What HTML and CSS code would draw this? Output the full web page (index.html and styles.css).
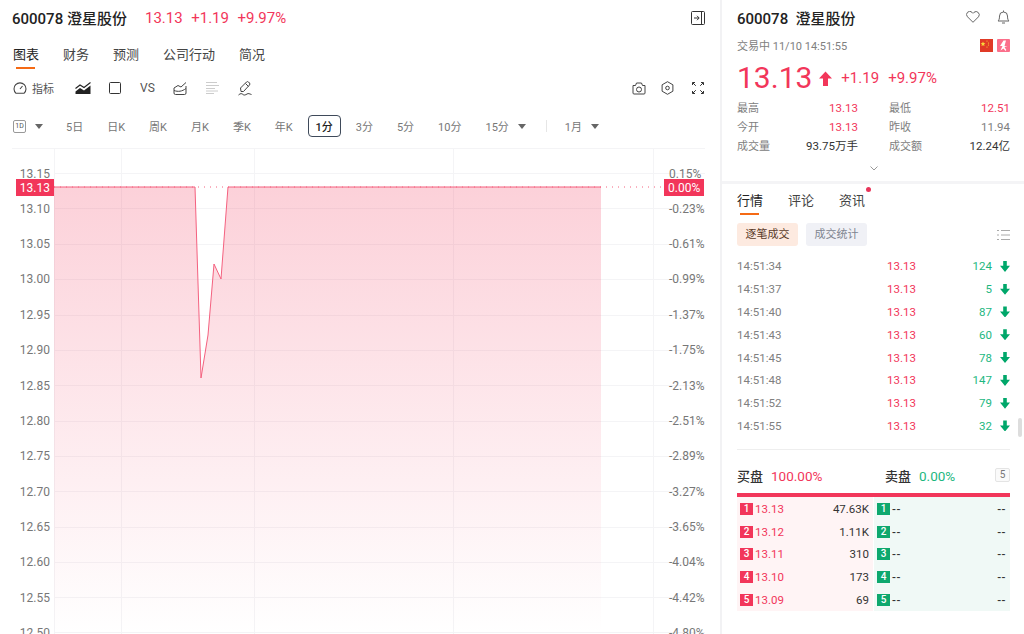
FILE: index.html
```html
<!DOCTYPE html>
<html lang="zh-CN">
<head>
    <meta charset="UTF-8">
    <title>600078 澄星股份</title>
    <link rel="stylesheet" href="styles.css">
</head>
<body>
    <div class="page">
        <main class="left">
            <header class="quote-bar">
                <span class="quote-name">600078 澄星股份</span>
                <span class="quote-nums">
                    <span>13.13</span><span>+1.19</span><span>+9.97%</span>
                </span>
                <svg class="collapse" width="14" height="14" viewBox="0 0 14 14" fill="none" stroke="#333" stroke-width="1"><rect x="0.5" y="0.5" width="13" height="13" rx="1"/><path d="M10.5 0.5v13M3 7h5M6 4.8L8.2 7 6 9.2"/></svg>
            </header>

            <nav class="tabs">
                <a class="active">图表</a><a>财务</a><a>预测</a><a>公司行动</a><a>简况</a>
            </nav>

            <div class="tools">
                <span class="tool-label">
                    <svg width="14" height="12" viewBox="0 0 14 12" fill="none" stroke="#444" stroke-width="1.1"><path d="M3 11.3A6 6 0 1 1 11 11.3zM7 7l2.5-3"/></svg>
                    指标
                </span>
                <svg class="t1" width="16" height="12" viewBox="0 0 16 12" fill="none" stroke="#222" stroke-width="1.1"><path d="M0.5 6.5L5 3l4 2.5L15.5 0.5"/><path d="M0.5 12V9.5L5 6l4 2.5 6.5-5V12z" fill="#222" stroke="none"/></svg>
                <svg class="t2" width="12" height="12" viewBox="0 0 12 12" fill="none" stroke="#333"><rect x="0.5" y="0.5" width="11" height="11" rx="1"/></svg>
                <span class="t3">VS</span>
                <svg class="t4" width="14" height="13" viewBox="0 0 14 13" fill="none" stroke="#444"><path d="M1 6L5 3.5 8 5l5-4.500M1 6v5a1.500 1.500 0 0 0 1.500 1.500h9A1.500 1.500 0 0 0 13 11V4"/><path d="M1 8.500c4 1.500 8 1 12-2"/></svg>
                <svg class="t5" width="13" height="12" viewBox="0 0 13 12" fill="none" stroke="#ccc"><path d="M0 0.5h11M0 3.5h13M0 6.5h9M0 9h12M0 11.5h8"/></svg>
                <svg class="t6" width="14" height="15" viewBox="0 0 14 15" fill="none" stroke="#444"><path d="M3 10.500l-.5-3.500L8.500 1a1.500 1.500 0 0 1 2 0l1 1a1.500 1.500 0 0 1 0 2l-6 6.500zM7.500 2.500l3 3M0.500 14c2-2 3.500-1.500 4.500-.5s2.500.5 4-.5 2.500 0 4.500.5"/></svg>
                <span class="tools-right">
                    <svg width="14" height="13" viewBox="0 0 14 13" fill="none" stroke="#444"><path d="M1 3.500h2.500L4.500 1h5l1 2.500H13v7.500a1 1 0 0 1-1 1H2a1 1 0 0 1-1-1z"/><circle cx="7" cy="7.500" r="2.500"/></svg>
                    <svg width="13" height="14" viewBox="0 0 13 14" fill="none" stroke="#444"><path d="M6.500 0.700l5.400 3.100v6.400l-5.400 3.100-5.400-3.100V3.800z"/><circle cx="6.500" cy="7" r="1.800"/></svg>
                    <svg class="expand" width="12" height="12" viewBox="0 0 12 12" fill="none" stroke="#333"><path d="M0.500 3V0.500H3M0.800 0.800l3 3M11.500 3V0.500H9M11.200 0.800l-3 3M0.500 9v2.500H3M0.800 11.200l3-3M11.500 9v2.500H9M11.200 11.200l-3-3"/></svg>
                </span>
            </div>

            <div class="periods">
                <span class="period-1d">1D</span>
                <i class="caret first"></i>
                <a>5日</a><a>日K</a><a>周K</a><a>月K</a><a>季K</a><a>年K</a>
                <a class="active">1分</a><a>3分</a><a>5分</a><a>10分</a>
                <a>15分<i class="caret"></i></a>
                <span class="period-sep"></span>
                <a>1月<i class="caret"></i></a>
            </div>

            <svg class="chart" width="720" height="486" viewBox="0 148 720 486">
                <defs>
                    <linearGradient id="area" gradientUnits="userSpaceOnUse" x1="0" y1="187" x2="0" y2="634">
                        <stop offset="0" stop-color="#f2365a" stop-opacity="0.23"/>
                        <stop offset="1" stop-color="#f2365a" stop-opacity="0"/>
                    </linearGradient>
                </defs>
                <g stroke="#f4f4f6" fill="none">
                    <path d="M12 148.500H705"/>
                    <path d="M54 173.500H705M54 208.500H705M54 244.500H705M54 279.500H705M54 315.500H705M54 350.500H705M54 385.500H705M54 421.500H705M54 456.500H705M54 491.500H705M54 527.500H705M54 562.500H705M54 597.500H705M54 632.500H705"/>
                    <path d="M54.500 148V634M121.500 148V634M254.500 148V634M453.500 148V634M653.500 148V634"/>
                </g>
                <path d="M54 187H195L201 378 208 335 214 264 221 279 228 187H601V634H54z" fill="url(#area)"/>
                <path d="M54 187H195L201 378 208 335 214 264 221 279 228 187H601" fill="none" stroke="#f4617f" stroke-width="1"/>
                <path d="M54 187H664" fill="none" stroke="#f4617f" stroke-dasharray="1 5"/>
                <rect x="16" y="179" width="38" height="17" fill="#f2365a"/>
                <rect x="664" y="179" width="40" height="17" fill="#f2365a"/>
                <g class="axis" text-anchor="end">
                    <text x="50" y="178">13.15</text>
                    <text class="tag" x="50" y="192">13.13</text>
                    <text x="50" y="213">13.10</text>
                    <text x="50" y="248">13.05</text>
                    <text x="50" y="283">13.00</text>
                    <text x="50" y="319">12.95</text>
                    <text x="50" y="354">12.90</text>
                    <text x="50" y="390">12.85</text>
                    <text x="50" y="425">12.80</text>
                    <text x="50" y="460">12.75</text>
                    <text x="50" y="496">12.70</text>
                    <text x="50" y="531">12.65</text>
                    <text x="50" y="566">12.60</text>
                    <text x="50" y="602">12.55</text>
                    <text x="50" y="637">12.50</text>
                </g>
                <g class="axis">
                    <text x="669" y="178">0.15%</text>
                    <text class="tag" x="668" y="192">0.00%</text>
                    <text x="669" y="213">-0.23%</text>
                    <text x="669" y="248">-0.61%</text>
                    <text x="669" y="283">-0.99%</text>
                    <text x="669" y="319">-1.37%</text>
                    <text x="669" y="354">-1.75%</text>
                    <text x="669" y="390">-2.13%</text>
                    <text x="669" y="425">-2.51%</text>
                    <text x="669" y="460">-2.89%</text>
                    <text x="669" y="496">-3.27%</text>
                    <text x="669" y="531">-3.65%</text>
                    <text x="669" y="566">-4.04%</text>
                    <text x="669" y="602">-4.42%</text>
                    <text x="669" y="637">-4.80%</text>
                </g>
            </svg>
        </main>

        <aside class="right">
            <section class="summary">
                <div class="sum-title">
                    <span class="sum-name">600078&nbsp; 澄星股份</span>
                    <svg width="14" height="12" viewBox="0 0 14 12" fill="none" stroke="#666"><path d="M7 11.300L1.500 5.800a3.200 3.200 0 0 1 0-4.500 3.200 3.200 0 0 1 4.500 0l1 1 1-1a3.200 3.200 0 0 1 4.500 4.500z"/></svg>
                    <svg width="13" height="14" viewBox="0 0 13 14" fill="none" stroke="#666"><path d="M1 11h11c-1-1-1.500-2-1.500-5a4 4 0 0 0-8 0c0 3-.5 4-1.500 5zM5 13h3M6.500 0.500V2"/></svg>
                </div>
                <div class="sum-status">
                    <span>交易中 11/10 14:51:55</span>
                    <span class="flags">
                        <svg width="13" height="13" viewBox="0 0 13 13"><rect width="13" height="13" fill="#e03a26"/><path d="M3 2.500l.7 1.600 1.700.1-1.300 1.100.4 1.700L3 6.200l-1.500.8.400-1.700L.6 4.200l1.700-.1z" fill="#f8d63a"/><circle cx="7" cy="2" r=".6" fill="#f8d63a"/><circle cx="8.500" cy="4" r=".6" fill="#f8d63a"/><circle cx="8.500" cy="6" r=".6" fill="#f8d63a"/><circle cx="7" cy="8" r=".6" fill="#f8d63a"/></svg>
                        <svg width="13" height="13" viewBox="0 0 13 13"><rect width="13" height="13" rx="1" fill="#fb6f8b"/><path d="M6.500 1.500L3 7h2.500L3.500 11.500l3-2 2 2.500.8-1-1.800-3 3-1H7.500L9 1.500z" fill="#fff"/></svg>
                    </span>
                </div>
                <div class="sum-price">
                    <span class="big">13.13</span>
                    <svg width="13" height="15" viewBox="0 0 13 15"><path d="M6.500 0.500L13 7.500H9V15H4V7.500H0z" fill="#f2365a"/></svg>
                    <span class="chg">+1.19</span>
                    <span class="chg pct">+9.97%</span>
                </div>
                <div class="stats">
                    <div class="stat"><span>最高</span><b class="up">13.13</b></div>
                    <div class="stat"><span>最低</span><b class="up">12.51</b></div>
                    <div class="stat"><span>今开</span><b class="up">13.13</b></div>
                    <div class="stat"><span>昨收</span><b>11.94</b></div>
                    <div class="stat"><span>成交量</span><b class="dark">93.75万手</b></div>
                    <div class="stat"><span>成交额</span><b class="dark">12.24亿</b></div>
                </div>
                <svg class="more" width="8" height="5" viewBox="0 0 8 5" fill="none" stroke="#999"><path d="M0.500 0.500L4 4l3.500-3.500"/></svg>
            </section>

            <section class="market">
                <nav class="tabs side-tabs">
                    <a class="active">行情</a><a>评论</a><a class="dot">资讯</a>
                </nav>
                <div class="sub-tabs">
                    <a class="active">逐笔成交</a><a>成交统计</a>
                    <svg width="13" height="10" viewBox="0 0 13 10" fill="none" stroke="#aaa"><path d="M0 0.500h2M4 0.500h9M0 5h2M4 5h9M0 9.500h2M4 9.500h9"/></svg>
                </div>

                <ul class="ticks">
                    <li><span>14:51:34</span><span class="up">13.13</span><span class="vol">124</span><i class="down-arrow"></i></li>
                    <li><span>14:51:37</span><span class="up">13.13</span><span class="vol">5</span><i class="down-arrow"></i></li>
                    <li><span>14:51:40</span><span class="up">13.13</span><span class="vol">87</span><i class="down-arrow"></i></li>
                    <li><span>14:51:43</span><span class="up">13.13</span><span class="vol">60</span><i class="down-arrow"></i></li>
                    <li><span>14:51:45</span><span class="up">13.13</span><span class="vol">78</span><i class="down-arrow"></i></li>
                    <li><span>14:51:48</span><span class="up">13.13</span><span class="vol">147</span><i class="down-arrow"></i></li>
                    <li><span>14:51:52</span><span class="up">13.13</span><span class="vol">79</span><i class="down-arrow"></i></li>
                    <li><span>14:51:55</span><span class="up">13.13</span><span class="vol">32</span><i class="down-arrow"></i></li>
                </ul>

                <div class="book-head">
                    <span class="bh-side buy"><b>买盘</b><span class="up">100.00%</span></span>
                    <span class="bh-side"><b>卖盘</b><span class="green">0.00%</span></span>
                    <span class="five">5</span>
                </div>
                <div class="book-bar"></div>
                <div class="book">
                    <div class="book-col bids">
                        <div class="lvl"><i>1</i><span class="up">13.13</span><span class="qty">47.63K</span></div>
                        <div class="lvl"><i>2</i><span class="up">13.12</span><span class="qty">1.11K</span></div>
                        <div class="lvl"><i>3</i><span class="up">13.11</span><span class="qty">310</span></div>
                        <div class="lvl"><i>4</i><span class="up">13.10</span><span class="qty">173</span></div>
                        <div class="lvl"><i>5</i><span class="up">13.09</span><span class="qty">69</span></div>
                    </div>
                    <div class="book-col asks">
                        <div class="lvl"><i>1</i><span>--</span><span class="qty">--</span></div>
                        <div class="lvl"><i>2</i><span>--</span><span class="qty">--</span></div>
                        <div class="lvl"><i>3</i><span>--</span><span class="qty">--</span></div>
                        <div class="lvl"><i>4</i><span>--</span><span class="qty">--</span></div>
                        <div class="lvl"><i>5</i><span>--</span><span class="qty">--</span></div>
                    </div>
                </div>
            </section>
            <div class="scroll-thumb"></div>
        </aside>
    </div>
</body>
</html>
```

FILE: styles.css
```css
* {
    box-sizing: border-box;
}
html, body {
    margin: 0;
    height: 100%;
    overflow: hidden;
}
body {
    font-family: Roboto, "Noto Sans CJK SC", sans-serif;
    color: #333;
    background-color: #fff;
}
a {
    cursor: pointer;
}
.up {
    color: #f2365a;
}
.green {
    color: #1cb77f;
}
.page {
    display: flex;
    height: 634px;
}

/* left side */
.left {
    width: 720px;
    flex-shrink: 0;
    height: 634px;
    overflow: hidden;
}
.quote-bar {
    display: flex;
    align-items: center;
    height: 36px;
    padding: 0 15px 1px 12px;
    font-size: 15px;
    font-weight: 500;
}
.quote-name {
    color: #222;
    width: 133px;
    flex-shrink: 0;
}
.quote-nums {
    display: flex;
    gap: 8.500px;
    color: #f2365a;
    font-weight: 400;
    font-size: 15px;
}
.collapse {
    margin-left: auto;
}
.tabs {
    display: flex;
    gap: 24px;
    height: 38px;
    padding: 0 13px;
    font-size: 13px;
    line-height: 38px;
    color: #444;
}
.tabs a.active {
    position: relative;
    color: #222;
}
.tabs a.active::after {
    content: "";
    position: absolute;
    left: 3px;
    right: 4px;
    bottom: 5px;
    height: 2px;
    background-color: #f56a14;
}
.tools {
    display: flex;
    align-items: center;
    height: 28px;
    padding: 0 16px 0 13px;
    font-size: 11px;
    color: #555;
}
.tool-label {
    display: flex;
    align-items: center;
    gap: 5px;
    width: 62px;
    flex-shrink: 0;
}
.t2 {
    margin-left: 18px;
}
.t3 {
    margin-left: 19px;
    font-size: 12px;
}
.t4 {
    margin-left: 18px;
}
.t5 {
    margin-left: 19px;
}
.t6 {
    margin-left: 19px;
}
.tools-right {
    display: flex;
    align-items: center;
    gap: 15px;
    margin-left: auto;
}
.expand {
    margin-left: 3px;
}
.periods {
    display: flex;
    align-items: center;
    height: 46px;
    padding: 2px 0 0 13px;
    font-size: 11px;
    color: #777;
}
.period-1d {
    width: 13px;
    height: 13px;
    border: 1px solid #999;
    border-radius: 2px;
    font-size: 7px;
    line-height: 11px;
    text-align: center;
    color: #555;
}
.caret {
    display: inline-block;
    width: 0;
    height: 0;
    margin-left: 9px;
    border-left: 4px solid transparent;
    border-right: 4px solid transparent;
    border-top: 5px solid #666;
}
.caret.first {
    margin-right: 23px;
}
.periods a {
    display: flex;
    align-items: center;
    margin-right: 24px;
}
.periods a.active {
    justify-content: center;
    width: 33px;
    height: 22px;
    margin-right: 15px;
    margin-left: -1px;
    border: 1px solid #3f4a5a;
    border-radius: 4px;
    color: #222;
    font-weight: 500;
}
.periods a:nth-of-type(6) {
    margin-right: 16px;
}
.period-sep {
    width: 1px;
    height: 12px;
    margin: 0 18px 0 -4px;
    background-color: #e6e6e6;
}
.chart {
    display: block;
}
.axis text {
    font-size: 12px;
    fill: #777;
}
.axis text.tag {
    fill: #fff;
}

/* right side */
.right {
    position: relative;
    flex: 1;
    min-width: 0;
    border-left: 2px solid #f2f2f4;
}
.summary {
    height: 181px;
    padding: 0 14px 0 15px;
}
.sum-title {
    display: flex;
    align-items: center;
    gap: 17px;
    height: 34px;
    margin-bottom: 2px;
    font-size: 15px;
    font-weight: 500;
    color: #222;
}
.sum-name {
    margin-right: auto;
}
.sum-status {
    display: flex;
    align-items: center;
    justify-content: space-between;
    height: 18px;
    font-size: 11px;
    color: #808080;
}
.flags {
    display: flex;
    gap: 4px;
}
.sum-price {
    display: flex;
    align-items: center;
    height: 30px;
    margin-top: 9px;
    color: #f2365a;
}
.big {
    font-size: 30px;
    line-height: 30px;
    margin-right: 7px;
}
.chg {
    font-size: 15px;
    margin-left: 8px;
}
.chg.pct {
    margin-left: 9px;
}
.sum-price svg {
    margin-right: 1px;
}
.stats {
    display: grid;
    grid-template-columns: 121px 121px;
    column-gap: 31px;
    margin-top: 6px;
}
.stat {
    display: flex;
    justify-content: space-between;
    height: 19px;
    font-size: 11px;
    line-height: 19px;
    color: #808080;
}
.stat b {
    font-size: 11.500px;
    font-weight: 400;
}
.stat b.up {
    color: #f2365a;
}
.stat b.dark {
    color: #333;
}
.more {
    display: block;
    margin: 10px auto 0;
}
.market {
    border-top: 3px solid #f4f4f6;
    padding: 0 14px 0 15px;
}
.side-tabs {
    gap: 25px;
    padding: 0;
    height: 36px;
    line-height: 33px;
    font-size: 13px;
}
.tabs a.dot {
    position: relative;
}
.dot::after {
    content: "";
    position: absolute;
    top: 3px;
    right: -6px;
    width: 5px;
    height: 5px;
    border-radius: 50%;
    background-color: #e8355a;
}
.sub-tabs {
    display: flex;
    align-items: center;
    gap: 8px;
    height: 23px;
    margin-top: 3px;
    font-size: 11px;
}
.sub-tabs a {
    width: 61px;
    height: 23px;
    border-radius: 3px;
    line-height: 23px;
    text-align: center;
    color: #808590;
    background-color: #f0f1f6;
}
.sub-tabs a.active {
    color: #5a3a28;
    background-color: #fdeae0;
}
.sub-tabs svg {
    margin-left: auto;
}
.ticks {
    list-style: none;
    margin: 9px 0 0;
    padding: 0 0 12px;
    border-bottom: 1px solid #eee;
    font-size: 11.500px;
    color: #808080;
}
.ticks li {
    display: flex;
    align-items: center;
    height: 22.800px;
}
.ticks li span:first-child {
    width: 150px;
}
.ticks .up {
    width: 28px;
    text-align: right;
}
.ticks .vol {
    width: 77px;
    text-align: right;
    color: #1cb77f;
}
.down-arrow {
    width: 10px;
    height: 11px;
    margin-left: 8px;
    background-color: #00a76a;
    clip-path: polygon(32% 0, 68% 0, 68% 45%, 100% 45%, 50% 100%, 0 45%, 32% 45%);
}
.book-head {
    display: flex;
    align-items: center;
    height: 43px;
    padding-top: 8px;
    font-size: 13.500px;
}
.bh-side {
    display: flex;
    align-items: center;
    gap: 8px;
}
.bh-side.buy {
    width: 148px;
}
.bh-side b {
    font-size: 13px;
    font-weight: 500;
    color: #333;
}
.five {
    width: 15px;
    height: 14px;
    margin-left: auto;
    margin-top: -1px;
    border: 1px solid #e4e4e4;
    border-radius: 2px;
    font-size: 10px;
    line-height: 12px;
    text-align: center;
    color: #777;
    background-color: #fafafa;
}
.book-bar {
    height: 4px;
    background-color: #f2365a;
}
.book {
    display: flex;
    gap: 1px;
}
.book-col {
    flex: 1;
    padding: 0 4px 0 3px;
}
.bids {
    background-color: #fff4f5;
}
.asks {
    background-color: #f0f9f6;
}
.lvl {
    display: flex;
    align-items: center;
    height: 22.750px;
    font-size: 11.500px;
    color: #333;
}
.lvl i {
    width: 13px;
    height: 12px;
    margin-right: 2px;
    font-style: normal;
    font-size: 10px;
    font-weight: 500;
    line-height: 12px;
    text-align: center;
    color: #fff;
    background-color: #f2365a;
}
.asks .lvl i {
    background-color: #0ea86e;
}
.asks .lvl span {
    letter-spacing: 0.500px;
    font-weight: 500;
}
.qty {
    margin-left: auto;
}
.scroll-thumb {
    position: absolute;
    top: 418px;
    right: 2px;
    width: 4px;
    height: 19px;
    border-radius: 2px;
    background-color: #ddd;
}
```
